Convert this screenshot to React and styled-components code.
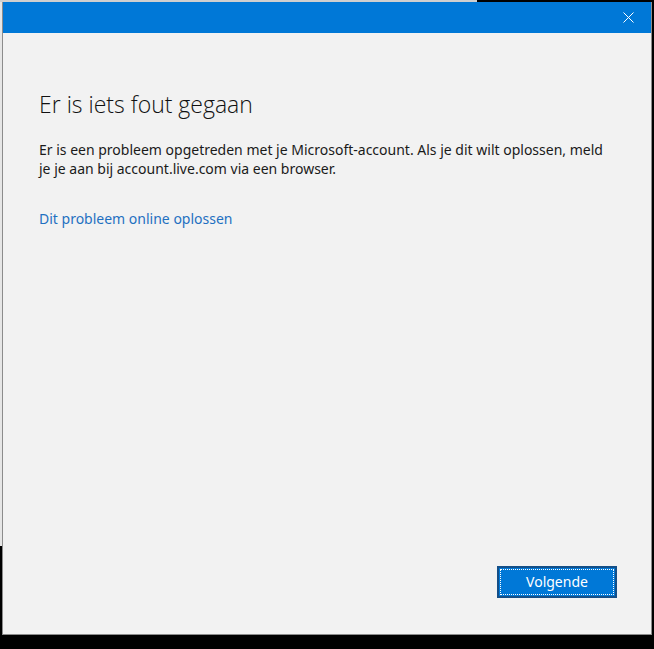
import React from "react";
import styled, { createGlobalStyle } from "styled-components";

const GlobalStyle = createGlobalStyle`
  html, body {
    margin: 0;
    padding: 0;
    height: 100%;
  }
  body {
    background:
      linear-gradient(#cfcfcf, #cfcfcf) 0 0 / 477px 2px no-repeat,
      linear-gradient(#e6e6e6, #e6e6e6) 0 0 / 2px 546px no-repeat,
      #000;
    font-family: "Noto Sans", "Open Sans", sans-serif;
  }
`;

const Desk = styled.div`
  padding: 2px 2px 14px 2px;
`;

const Window = styled.div`
  width: 650px;
  height: 633px;
  box-sizing: border-box;
  border: 1px solid #8c8c8c;
  border-top: none;
  background: #f2f2f2;
  display: flex;
  flex-direction: column;
`;

const TitleBar = styled.div`
  height: 31px;
  background: #0078d7;
  display: flex;
  justify-content: flex-end;
  align-items: center;
  padding-right: 16px;
`;

const CloseButton = styled.button`
  border: none;
  background: transparent;
  padding: 0;
  width: 14px;
  height: 14px;
  display: flex;
  align-items: center;
  justify-content: center;
  cursor: pointer;
`;

const Content = styled.div`
  flex: 1;
  padding: 56px 36px 0 36px;
  display: flex;
  flex-direction: column;
`;

const Heading = styled.h1`
  margin: 0;
  font-family: "Open Sans", "Noto Sans", sans-serif;
  font-size: 23px;
  font-weight: 300;
  color: #111111;
  line-height: 30px;
`;

const Message = styled.p`
  margin: 21px 0 0;
  font-size: 14px;
  line-height: 19px;
  color: #1a1a1a;
  max-width: 575px;
`;

const Link = styled.a`
  margin-top: 31px;
  font-size: 14px;
  line-height: 19px;
  color: #1f70c1;
  text-decoration: none;
  cursor: pointer;
  align-self: flex-start;
`;

const Footer = styled.div`
  display: flex;
  justify-content: flex-end;
  padding: 0 34px 36px 0;
`;

const PrimaryButton = styled.button`
  width: 120px;
  height: 32px;
  box-sizing: border-box;
  border: 2px solid #144f88;
  background: #0078d7;
  padding: 1px;
  cursor: pointer;
  font-family: inherit;
`;

const FocusRing = styled.span`
  display: flex;
  align-items: center;
  justify-content: center;
  height: 100%;
  box-sizing: border-box;
  border: 1px dotted #ffffff;
  color: #ffffff;
  font-size: 14px;
  padding-bottom: 2px;
`;

export default function App() {
  return (
    <>
      <GlobalStyle />
      <Desk>
        <Window>
          <TitleBar>
            <CloseButton aria-label="Sluiten">
              <svg width="11" height="11" viewBox="0 0 11 11">
                <path d="M0.5 0.5 L10.5 10.5 M10.5 0.5 L0.5 10.5" stroke="#fff" strokeWidth="1" />
              </svg>
            </CloseButton>
          </TitleBar>
          <Content>
            <Heading>Er is iets fout gegaan</Heading>
            <Message>
              Er is een probleem opgetreden met je Microsoft-account. Als je dit wilt oplossen, meld
              je je aan bij account.live.com via een browser.
            </Message>
            <Link>Dit probleem online oplossen</Link>
          </Content>
          <Footer>
            <PrimaryButton>
              <FocusRing>Volgende</FocusRing>
            </PrimaryButton>
          </Footer>
        </Window>
      </Desk>
    </>
  );
}
